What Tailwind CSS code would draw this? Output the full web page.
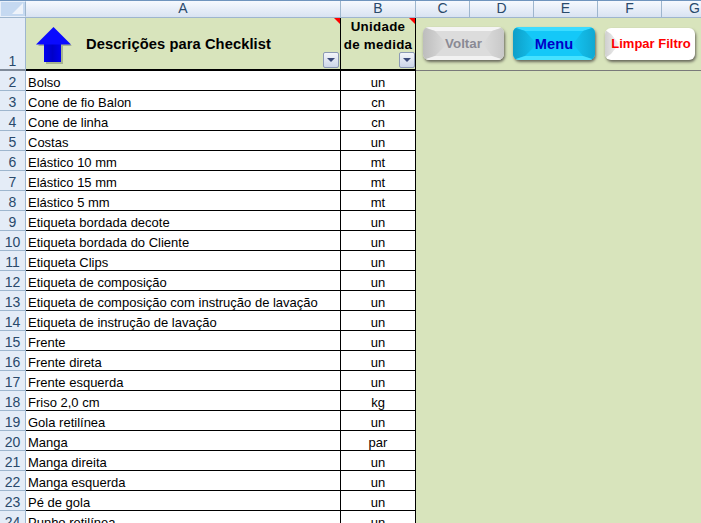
<!DOCTYPE html>
<html lang="pt">

<head>
  <meta charset="UTF-8">
  <title>Checklist</title>
  <script src="https://cdn.jsdelivr.net/npm/@tailwindcss/browser@4"></script>
</head>

<body class="w-[701px] h-[523px] overflow-hidden bg-[#d8e4bc] font-['Liberation_Sans',Arial,sans-serif] text-[13px] text-black">
  <!-- column letters -->
  <div class="flex h-[18px] bg-gradient-to-b from-[#f6f9fe] to-[#d9e3f2] border-t border-t-[#6f94bd] border-b border-b-[#9eb6ce] text-[14px] leading-[15px] text-[#29496b] text-center">
    <div class="w-[26px] shrink-0 bg-[#c5d9f1] border border-[#e8f0fa] border-r-[#9eb6ce] relative">
      <div class="absolute right-[2px] bottom-[2px] w-0 h-0 border-l-[11px] border-l-transparent border-b-[11px] border-b-[#eef3fa]"></div>
    </div>
    <div class="w-[315px] shrink-0 border-r border-[#9eb6ce]">A</div>
    <div class="w-[75px] shrink-0 border-r border-[#9eb6ce]">B</div>
    <div class="w-[54px] shrink-0 border-r border-[#9eb6ce]">C</div>
    <div class="w-[64px] shrink-0 border-r border-[#9eb6ce]">D</div>
    <div class="w-[64px] shrink-0 border-r border-[#9eb6ce]">E</div>
    <div class="w-[64px] shrink-0 border-r border-[#9eb6ce]">F</div>
    <div class="flex-1 text-left pl-[27px]">G</div>
  </div>

  <!-- row 1 -->
  <div class="flex h-[53px] items-stretch">
    <div class="w-[26px] shrink-0 bg-[#e4ecf7] border-r border-r-[#9eb6ce] border-b-2 border-b-[#7f8a99] flex items-end justify-center text-[14px] leading-[16px] text-[#29496b]">1</div>
    <div class="w-[315px] shrink-0 relative border-r border-r-black border-b-2 border-b-black flex items-center">
      <svg class="ml-[10px] shrink-0" width="38" height="40" viewBox="0 0 38 40">
        <defs>
          <linearGradient id="arrowFill" x1="0" x2="1" y1="0" y2="0">
            <stop offset="0" stop-color="#0000f0" />
            <stop offset="0.5" stop-color="#0000c8" />
            <stop offset="1" stop-color="#0000f0" />
          </linearGradient>
        </defs>
        <path d="M18.5 5 L36 22 L27 22 L27 40 L10 40 L10 22 L2 22 Z" fill="#6b7a5a" opacity="0.45" />
        <path d="M8 20 L25 20 L25 38 L8 38 Z" fill="url(#arrowFill)" />
        <path d="M17.5 3 L35 20.5 L0 20.5 Z" fill="#0a0aff" />
      </svg>
      <div class="ml-[12px] mt-[2px] font-bold text-[14.67px] tracking-[0.1px] leading-none">Descrições para Checklist</div>
      <div class="absolute top-0 right-0 w-0 h-0 border-l-[6px] border-l-transparent border-t-[6px] border-t-[#ff0000]"></div>
      <div class="absolute right-[1px] bottom-[1px] w-[16px] h-[16px] rounded-[2px] border border-[#8c9ab5] bg-gradient-to-b from-[#f3f5fa] to-[#cdd6e8] flex items-center justify-center">
        <div class="w-0 h-0 border-l-[4px] border-r-[4px] border-t-[4px] border-l-transparent border-r-transparent border-t-[#3b4a7a]"></div>
      </div>
    </div>
    <div class="w-[75px] shrink-0 relative border-r border-r-black border-b-2 border-b-black text-center font-bold text-[13.33px] leading-[18px] tracking-[0.3px]">
      Unidade<br>de medida
      <div class="absolute top-0 right-0 w-0 h-0 border-l-[6px] border-l-transparent border-t-[6px] border-t-[#ff0000]"></div>
      <div class="absolute right-0 bottom-[1px] w-[16px] h-[16px] rounded-[2px] border border-[#8c9ab5] bg-gradient-to-b from-[#f3f5fa] to-[#cdd6e8] flex items-center justify-center">
        <div class="w-0 h-0 border-l-[4px] border-r-[4px] border-t-[4px] border-l-transparent border-r-transparent border-t-[#3b4a7a]"></div>
      </div>
    </div>
    <div class="flex-1 flex border-b border-b-[#7a7a7a] pt-[9px] pl-[7px] gap-[9px]">
      <div class="relative w-[81px] h-[33px] flex items-center justify-center font-bold text-[13.33px] text-[#8a8a94] shadow-[1px_2px_3px_#66665a] rounded-[6px] overflow-hidden">
        <svg class="absolute inset-0" width="81" height="33" viewBox="0 0 81 33">
          <defs>
            <linearGradient id="greyLeft" x1="0" x2="1" y1="0" y2="0">
              <stop offset="0" stop-color="#bdbdbd" />
              <stop offset="1" stop-color="#dcdcdc" />
            </linearGradient>
            <linearGradient id="greyRight" x1="1" x2="0" y1="0" y2="0">
              <stop offset="0" stop-color="#c8c8c8" />
              <stop offset="1" stop-color="#dcdcdc" />
            </linearGradient>
          </defs>
          <rect width="81" height="33" fill="#dcdcdc" />
          <polygon points="0,0 81,0 69,4 12,4" fill="#f4f4f4" />
          <polygon points="0,0 12,4 24,17 12,29 0,33" fill="url(#greyLeft)" />
          <polygon points="81,0 69,4 60,17 69,29 81,33" fill="url(#greyRight)" />
          <polygon points="0,33 12,29 69,29 81,33" fill="#f2f2f2" />
        </svg>
        <span class="relative">Voltar</span>
      </div>
      <div class="relative w-[82px] h-[33px] flex items-center justify-center font-bold text-[14.67px] text-[#0000c8] shadow-[1px_2px_3px_#66665a] rounded-[6px] overflow-hidden">
        <svg class="absolute inset-0" width="82" height="33" viewBox="0 0 82 33">
          <defs>
            <linearGradient id="blueLeft" x1="0" x2="1" y1="0" y2="0">
              <stop offset="0" stop-color="#0e9fc8" />
              <stop offset="1" stop-color="#14c4f2" />
            </linearGradient>
            <linearGradient id="blueRight" x1="1" x2="0" y1="0" y2="0">
              <stop offset="0" stop-color="#10a8d2" />
              <stop offset="1" stop-color="#14c4f2" />
            </linearGradient>
          </defs>
          <rect width="82" height="33" fill="#14c8f8" />
          <polygon points="0,0 82,0 70,4 12,4" fill="#3cdcff" />
          <polygon points="0,0 12,4 24,17 12,29 0,33" fill="url(#blueLeft)" />
          <polygon points="82,0 70,4 60,17 70,29 82,33" fill="url(#blueRight)" />
          <polygon points="0,33 12,29 70,29 82,33" fill="#45e2ff" />
        </svg>
        <span class="relative">Menu</span>
      </div>
      <div class="relative ml-[1px] w-[90px] h-[32px] mt-[1px] flex items-center justify-center font-bold text-[13px] text-[#ff0000] shadow-[1px_2px_3px_#66665a] rounded-[6px] overflow-hidden bg-white">
        <svg class="absolute inset-0" width="90" height="32" viewBox="0 0 90 32">
          <defs>
            <linearGradient id="whiteLeft" x1="0" x2="1" y1="0" y2="0">
              <stop offset="0" stop-color="#cfcfcf" />
              <stop offset="1" stop-color="#f4f4f4" />
            </linearGradient>
          </defs>
          <polygon points="0,2 6,6 14,16 6,26 0,30" fill="url(#whiteLeft)" />
        </svg>
        <span class="relative pl-[2px] whitespace-nowrap">Limpar Filtro</span>
      </div>
    </div>
  </div>

  <!-- data rows -->
  <div id="rows"></div>

  <script>
    const items = [
      ["Bolso", "un"],
      ["Cone de fio Balon", "cn"],
      ["Cone de linha", "cn"],
      ["Costas", "un"],
      ["Elástico 10 mm", "mt"],
      ["Elástico 15 mm", "mt"],
      ["Elástico 5 mm", "mt"],
      ["Etiqueta bordada decote", "un"],
      ["Etiqueta bordada do Cliente", "un"],
      ["Etiqueta Clips", "un"],
      ["Etiqueta de composição", "un"],
      ["Etiqueta de composição com instrução de lavação", "un"],
      ["Etiqueta de instrução de lavação", "un"],
      ["Frente", "un"],
      ["Frente direta", "un"],
      ["Frente esquerda", "un"],
      ["Friso 2,0 cm", "kg"],
      ["Gola retilínea", "un"],
      ["Manga", "par"],
      ["Manga direita", "un"],
      ["Manga esquerda", "un"],
      ["Pé de gola", "un"],
      ["Punho retilínea", "un"],
    ];
    rows.innerHTML = items.map((item, index) => `
      <div class="flex h-[20px] leading-[19px]">
        <div class="w-[26px] shrink-0 bg-[#e4ecf7] border-r border-b border-[#9eb6ce] text-center text-[14px] text-[#29496b] pt-[2px]">${index + 2}</div>
        <div class="w-[315px] shrink-0 bg-white border-r border-b border-black pl-[2px] pt-[2px] whitespace-nowrap overflow-hidden">${item[0]}</div>
        <div class="w-[75px] shrink-0 bg-white border-r border-b border-black text-center pt-[2px]">${item[1]}</div>
      </div>`).join("");
  </script>
</body>

</html>
